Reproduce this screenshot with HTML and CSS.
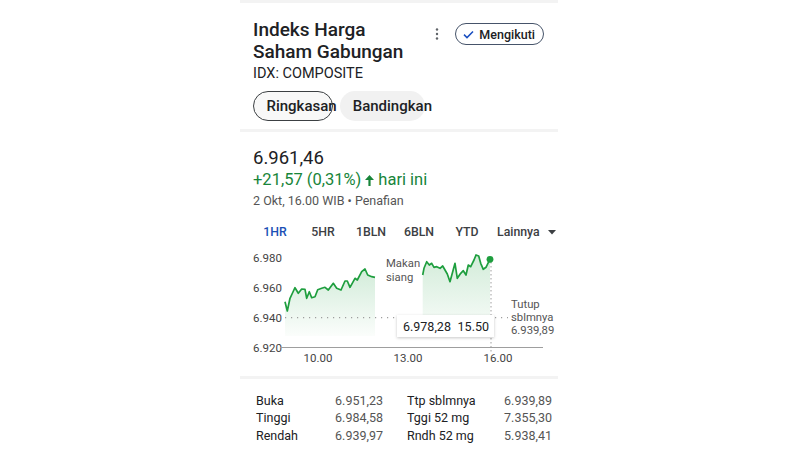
FILE: index.html
```html
<!DOCTYPE html>
<html lang="id">
<head>
    <meta charset="UTF-8">
    <meta name="viewport" content="width=device-width, initial-scale=1.0">
    <title>Indeks Harga Saham Gabungan</title>
    <link rel="stylesheet" href="styles.css">
</head>
<body>
    <div class="page">
        <div class="band"></div>

        <div class="header">
            <div class="top">
                <h1 class="title">Indeks Harga<br>Saham Gabungan</h1>
                <div class="actions">
                    <svg class="kebab" width="4" height="12" viewBox="0 0 4 12">
                        <circle cx="2" cy="1.5" r="1.2"/>
                        <circle cx="2" cy="6" r="1.2"/>
                        <circle cx="2" cy="10.5" r="1.2"/>
                    </svg>
                    <button class="follow-btn">
                        <svg width="11" height="9" viewBox="0 0 11 9">
                            <path d="M1 4.6 L4 7.6 L10 1.4" fill="none" stroke="#1a4fc0" stroke-width="1.5"/>
                        </svg>
                        Mengikuti
                    </button>
                </div>
            </div>
            <div class="symbol">IDX: COMPOSITE</div>
            <div class="chips">
                <div class="chip chip-active">Ringkasan</div>
                <div class="chip chip-plain">Bandingkan</div>
            </div>
        </div>

        <div class="band"></div>

        <div class="quote">
            <div class="price">6.961,46</div>
            <div class="change">
                +21,57 (0,31%)
                <svg class="up" width="9" height="11" viewBox="0 0 9 11">
                    <path d="M4.5 0 L9 5 H5.6 V11 H3.4 V5 H0 Z" fill="#18853a"/>
                </svg>
                hari ini
            </div>
            <div class="meta">2 Okt, 16.00 WIB • Penafian</div>

            <div class="tabs">
                <div class="tab active">1HR</div>
                <div class="tab">5HR</div>
                <div class="tab">1BLN</div>
                <div class="tab">6BLN</div>
                <div class="tab">YTD</div>
                <div class="more">
                    Lainnya
                    <svg width="8" height="5" viewBox="0 0 8 5"><path d="M0 0 H8 L4 4.5 Z" fill="#3c4043"/></svg>
                </div>
            </div>
        </div>

        <svg class="chart" width="318" height="125" viewBox="240 245 318 125">
            <defs>
                <linearGradient id="area" x1="0" y1="0" x2="0" y2="1">
                    <stop offset="0" stop-color="#34a853" stop-opacity="0.22"/>
                    <stop offset="1" stop-color="#34a853" stop-opacity="0.02"/>
                </linearGradient>
                <filter id="shadow" x="-20%" y="-40%" width="140%" height="180%">
                    <feDropShadow dx="0" dy="1" stdDeviation="1.5" flood-color="#000" flood-opacity="0.22"/>
                </filter>
            </defs>

            <g class="ylabels">
                <text x="253" y="261.5">6.980</text>
                <text x="253" y="291.5">6.960</text>
                <text x="253" y="321.5">6.940</text>
                <text x="253" y="351.5">6.920</text>
            </g>

            <path d="M285 301.7 L287.3 311 L290 298.3 L292.5 293 L295 287.7 L298.3 293.3 L301.7 289 L305 289.3 L306.7 298.3 L309.3 291.7 L311.7 297.7 L315 296.7 L317.7 289.7 L321.7 288.3 L325 287.3 L328.3 290 L333.3 283.3 L336.7 288.3 L341 290 L345 281 L347.3 281 L350 287.3 L355 278.3 L357.3 280 L361.7 271.7 L365 269 L367.7 275 L371.7 276.7 L375 277.3 L375 336 L285 336 Z" fill="url(#area)"/>
            <path d="M422.7 275 L424 268.3 L426.7 261.7 L429.3 265 L431.7 263.3 L434 267.3 L436.7 266.7 L440 268.3 L442.7 266 L445 270 L447.3 274 L450 281.7 L452.7 271.7 L455 263.3 L457.3 278.3 L460.7 273.3 L463.3 270.7 L466 275 L468.3 265 L470.7 266.7 L474 260 L476 255 L478.7 256 L480.7 263.3 L483.3 269.3 L486 267.3 L488.3 262.7 L490 259.3 L490 336 L422.7 336 Z" fill="url(#area)"/>

            <line x1="285" y1="317.7" x2="508" y2="317.7" stroke="#9e9e9e" stroke-width="1.2" stroke-dasharray="1.2 4.8"/>
            <line x1="491" y1="262" x2="491" y2="352" stroke="#9e9e9e" stroke-width="1" stroke-dasharray="1.5 2.5"/>
            <line x1="280" y1="347.5" x2="543" y2="347.5" stroke="#9e9e9e" stroke-width="1"/>

            <polyline class="line" points="285,301.7 287.3,311 290,298.3 292.5,293 295,287.7 298.3,293.3 301.7,289 305,289.3 306.7,298.3 309.3,291.7 311.7,297.7 315,296.7 317.7,289.7 321.7,288.3 325,287.3 328.3,290 333.3,283.3 336.7,288.3 341,290 345,281 347.3,281 350,287.3 355,278.3 357.3,280 361.7,271.7 365,269 367.7,275 371.7,276.7 375,277.3"/>
            <polyline class="line" points="422.7,275 424,268.3 426.7,261.7 429.3,265 431.7,263.3 434,267.3 436.7,266.7 440,268.3 442.7,266 445,270 447.3,274 450,281.7 452.7,271.7 455,263.3 457.3,278.3 460.7,273.3 463.3,270.7 466,275 468.3,265 470.7,266.7 474,260 476,255 478.7,256 480.7,263.3 483.3,269.3 486,267.3 488.3,262.7 490,259.3"/>
            <circle cx="490" cy="259.3" r="3.4" fill="#1e9e3e"/>

            <g class="note">
                <text x="386" y="267">Makan</text>
                <text x="386" y="280.5">siang</text>
                <text x="511" y="307.5">Tutup</text>
                <text x="511" y="320.5">sblmnya</text>
                <text x="511" y="333.5">6.939,89</text>
            </g>

            <g class="xlabels">
                <text x="318" y="361.7">10.00</text>
                <text x="408" y="361.7">13.00</text>
                <text x="498" y="361.7">16.00</text>
            </g>

            <rect x="397" y="315" width="97" height="22" fill="#fff" filter="url(#shadow)"/>
            <g class="tip">
                <text x="403" y="330.7">6.978,28</text>
                <text x="489" y="330.7" text-anchor="end">15.50</text>
            </g>
        </svg>

        <div class="band band-low"></div>

        <div class="stats">
            <div class="stat"><span>Buka</span><span class="val">6.951,23</span></div>
            <div class="stat"><span>Ttp sblmnya</span><span class="val">6.939,89</span></div>
            <div class="stat"><span>Tinggi</span><span class="val">6.984,58</span></div>
            <div class="stat"><span>Tggi 52 mg</span><span class="val">7.355,30</span></div>
            <div class="stat"><span>Rendah</span><span class="val">6.939,97</span></div>
            <div class="stat"><span>Rndh 52 mg</span><span class="val">5.938,41</span></div>
        </div>
    </div>
</body>
</html>
```

FILE: styles.css
```css
body {
    margin: 0;
    background: #fff;
    font-family: Roboto, "Noto Sans", sans-serif;
    color: #202124;
}

.page {
    width: 318px;
    margin-left: 240px;
}

.band {
    height: 3px;
    background: #f3f3f3;
}

.band-low {
    margin-top: 6px;
}

.header {
    padding: 16px 14px 8px 13px;
}

.top {
    display: flex;
    align-items: flex-start;
}

.title {
    flex: 1;
    margin: 0;
    font-size: 19px;
    line-height: 22px;
    font-weight: 500;
}

.actions {
    display: flex;
    align-items: center;
    margin-top: 4px;
}

.kebab {
    fill: #5f6368;
    margin-right: 16px;
}

.follow-btn {
    display: flex;
    align-items: center;
    gap: 5px;
    height: 22px;
    box-sizing: border-box;
    padding: 0 8px 0 7px;
    border: 1.2px solid #46546a;
    border-radius: 12px;
    background: #fff;
    font-family: inherit;
    font-size: 12.5px;
    font-weight: 500;
    color: #202124;
}

.symbol {
    margin-top: 2px;
    font-size: 14.5px;
    line-height: 18px;
}

.chips {
    display: flex;
    gap: 7px;
    margin-top: 8px;
}

.chip {
    height: 30px;
    box-sizing: border-box;
    border-radius: 15px;
    display: flex;
    align-items: center;
    white-space: nowrap;
    font-size: 15px;
    font-weight: 500;
}

.chip-active {
    width: 80px;
    padding-left: 12.5px;
    border: 1.3px solid #3c4043;
    background: #f8f8f8;
}

.chip-plain {
    width: 85px;
    padding-left: 12.7px;
    background: #f1f1f1;
}

.quote {
    padding: 14px 13px 0 13px;
}

.price {
    font-size: 18.5px;
    line-height: 24px;
}

.change {
    display: flex;
    align-items: center;
    font-size: 16.5px;
    line-height: 20px;
    color: #18853a;
}

.change .up {
    margin: 0 4px 0 4px;
}

.meta {
    margin-top: 2px;
    font-size: 12.5px;
    line-height: 18px;
    color: #555;
}

.tabs {
    display: flex;
    margin: 13px 0 0 -2px;
    font-size: 12.3px;
    font-weight: 500;
    line-height: 18px;
}

.tab {
    flex-shrink: 0;
    width: 48px;
    text-align: center;
    color: #3c4043;
}

.tab.active {
    color: #1a4fb5;
}

.more {
    flex-shrink: 0;
    display: flex;
    align-items: center;
    gap: 8px;
    margin-left: 6px;
    color: #3c4043;
}

.chart {
    display: block;
    margin-top: 4px;
}

.chart text {
    font-family: Roboto, sans-serif;
}

.ylabels text,
.xlabels text {
    font-size: 11.5px;
    fill: #444;
}

.xlabels text {
    text-anchor: middle;
}

.line {
    fill: none;
    stroke: #1e9e3e;
    stroke-width: 1.7;
    stroke-linejoin: round;
}

.note text {
    font-size: 11.3px;
    fill: #555;
}

.tip text {
    font-size: 12.5px;
    fill: #202124;
}

.stats {
    display: grid;
    grid-template-columns: 127px 145px;
    column-gap: 24px;
    padding: 12.5px 6px 0 16px;
    font-size: 12.5px;
    line-height: 17.6px;
}

.stat {
    display: flex;
    justify-content: space-between;
}

.stat .val {
    color: #555;
}
```
